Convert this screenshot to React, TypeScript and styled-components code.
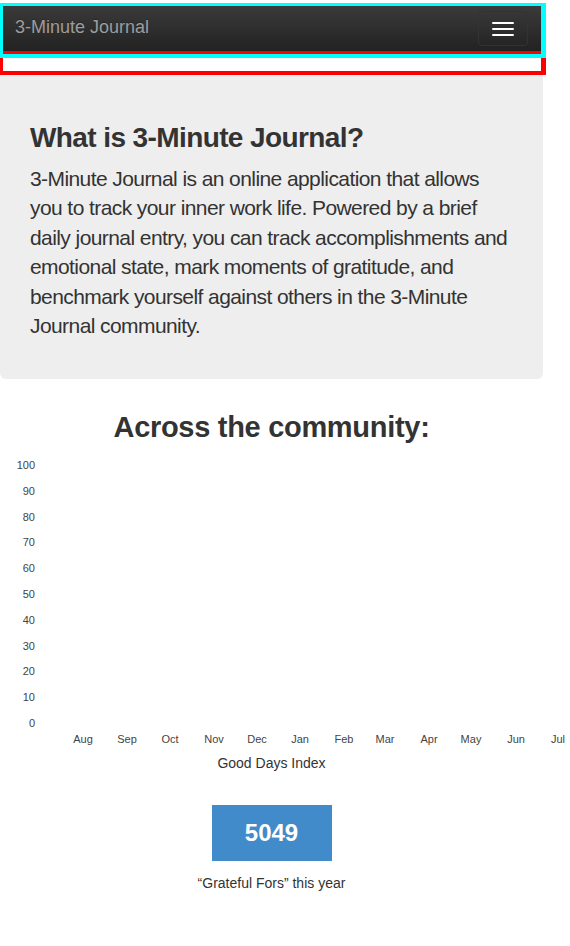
import React from 'react'
import styled, { createGlobalStyle } from 'styled-components'

const GlobalStyle = createGlobalStyle`
  html, body { margin:0; padding:0; background:#fff; }
  body {
    font-family:"Liberation Sans", Helvetica, Arial, sans-serif;
    color:#333;
  }
  * { box-sizing:border-box; }
`

const months = ['Aug','Sep','Oct','Nov','Dec','Jan','Feb','Mar','Apr','May','Jun','Jul']
const monthX = [83,127,170,214,257,300,344,385,429,471,516,558]
const ticks = [100,90,80,70,60,50,40,30,20,10,0]

const App = () => {
  return (
    <SPage>
      <GlobalStyle />
      <SHeader>
        <SNavbar>
          <SBrand>3-Minute Journal</SBrand>
          <SToggle aria-label="menu">
            <SBar />
            <SBar />
            <SBar />
          </SToggle>
        </SNavbar>
        <SHighlight color="#ff0000" top={48} height={24} />
        <SHighlight color="#00ffff" top={0} height={55} />
      </SHeader>

      <SJumbotron>
        <SH2>What is 3-Minute Journal?</SH2>
        <SLead>
          3-Minute Journal is an online application that allows you to track your inner work life.
          Powered by a brief daily journal entry, you can track accomplishments and emotional state,
          mark moments of gratitude, and benchmark yourself against others in the 3-Minute Journal
          community.
        </SLead>
      </SJumbotron>

      <SCommunity>
        <SH2Center>Across the community:</SH2Center>
        <SChart width="570" height="300" viewBox="0 0 570 300">
          {ticks.map((t, i) => (
            <text key={t} x="35" y={15 + i * 25.8} textAnchor="end" dominantBaseline="middle">
              {t}
            </text>
          ))}
          {months.map((m, i) => (
            <text key={m} x={monthX[i]} y="289" textAnchor="middle" dominantBaseline="middle">
              {m}
            </text>
          ))}
        </SChart>
        <SAxisTitle>Good Days Index</SAxisTitle>
        <SStatBox>5049</SStatBox>
        <SCaption>“Grateful Fors” this year</SCaption>
      </SCommunity>
    </SPage>
  )
}

const SPage = styled.div`
  width:543px;
  min-height:946px;
`

const SHeader = styled.div`
  position:relative;
  height:72px;
  width:546px;
`

const SNavbar = styled.div`
  margin:3px 5px 0 3px;
  height:48px;
  display:flex;
  align-items:center;
  justify-content:space-between;
  padding:0 13px 0 12px;
  background:linear-gradient(to bottom,#3c3c3c 0,#222 100%);
`

const SBrand = styled.a`
  font-size:18px;
  color:#9d9d9d;
  text-shadow:0 -1px 0 rgba(0,0,0,.25);
  margin-top:1px;
`

const SToggle = styled.button`
  width:50px;
  height:35px;
  margin-top:3px;
  border:1px solid #333;
  border-radius:4px;
  background:transparent;
  display:flex;
  flex-direction:column;
  align-items:center;
  justify-content:center;
  gap:4px;
  padding:0;
`

const SBar = styled.span`
  display:block;
  width:22px;
  height:2px;
  background:#fff;
  border-radius:1px;
`

const SHighlight = styled.div<{ color: string; top: number; height: number }>`
  position:absolute;
  left:0;
  top:${p => p.top}px;
  width:546px;
  height:${p => p.height}px;
  border:3px solid ${p => p.color};
  border-right-width:5px;
  border-bottom-width:4px;
  pointer-events:none;
`

const SJumbotron = styled.div`
  background:#eee;
  border-radius:0 0 6px 6px;
  padding:46px 30px 24px 30px;
`

const SH2 = styled.h2`
  margin:0 0 10px;
  font-size:28px;
  line-height:33px;
  font-weight:700;
  letter-spacing:-0.6px;
  color:#333;
`

const SLead = styled.p`
  margin:0 0 15px;
  width:482px;
  font-size:21px;
  line-height:29.4px;
  font-weight:300;
  color:#333;
  letter-spacing:-0.58px;
`

const SCommunity = styled.div`
  display:flex;
  flex-direction:column;
  align-items:center;
`

const SH2Center = styled(SH2)`
  margin:32px 0 7px;
  font-size:29px;
  letter-spacing:-0.3px;
  text-align:center;
`

const SChart = styled.svg`
  display:block;
  align-self:flex-start;
  overflow:visible;
  font-family:"Liberation Sans", Helvetica, Arial, sans-serif;
  font-size:11px;
  fill:#444;
`

const SAxisTitle = styled.div`
  font-size:14px;
  line-height:20px;
  margin-top:2px;
`

const SStatBox = styled.div`
  margin-top:32px;
  width:120px;
  height:56px;
  background:#428bca;
  color:#fff;
  font-size:24px;
  font-weight:700;
  display:flex;
  align-items:center;
  justify-content:center;
`

const SCaption = styled.div`
  margin-top:12px;
  font-size:14px;
  line-height:20px;
`

export default App
